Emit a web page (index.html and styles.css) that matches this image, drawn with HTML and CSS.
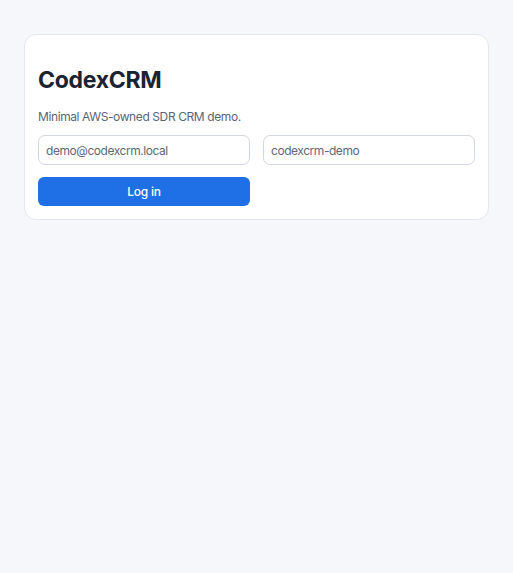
FILE: index.html
```html
<!DOCTYPE html>
<html lang="en">
<head>
<meta charset="utf-8">
<title>CodexCRM</title>
<link rel="stylesheet" href="styles.css">
</head>
<body>
<main class="page">
  <section class="card">
    <h1 class="title">CodexCRM</h1>
    <p class="subtitle">Minimal AWS-owned SDR CRM demo.</p>
    <form class="login">
      <input class="field" type="email" value="demo@codexcrm.local">
      <input class="field" type="password" placeholder="codexcrm-demo">
      <button class="btn" type="button">Log in</button>
    </form>
  </section>
</main>
</body>
</html>
```

FILE: styles.css
```css
* { box-sizing: border-box; }
html, body { margin: 0; padding: 0; }
body {
  background: #f5f7fb;
  font-family: Inter, "Noto Sans", "Liberation Sans", sans-serif;
  color: #1b2232;
}
.page {
  padding: 34px 24px;
}
.card {
  background: #ffffff;
  border: 1px solid #e3e6ec;
  border-radius: 12px;
  padding: 13px;
}
.title {
  font-size: 23px;
  font-weight: 700;
  line-height: 29px;
  letter-spacing: -0.3px;
  margin: 18px 0 0 0;
  color: #1b2232;
}
.subtitle {
  font-size: 12px;
  line-height: 16px;
  letter-spacing: -0.4px;
  margin: 14px 0 0 0;
  color: #5b6576;
}
.login {
  margin-top: 10px;
  display: grid;
  grid-template-columns: minmax(0, 1fr) minmax(0, 1fr);
  column-gap: 13px;
  row-gap: 12px;
}
.field {
  width: 100%;
  min-width: 0;
  height: 30px;
  border: 1px solid #d3d7de;
  border-radius: 7px;
  padding: 0 7px;
  font-family: inherit;
  font-size: 12px;
  letter-spacing: -0.45px;
  color: #5f6877;
  background: #fff;
}
.field::placeholder { color: #5f6877; opacity: 1; }
.btn {
  height: 29px;
  border: none;
  border-radius: 6px;
  background: #1f6fe6;
  color: #ffffff;
  font-family: inherit;
  font-size: 12px;
  letter-spacing: -0.2px;
  font-weight: 500;
}
```
